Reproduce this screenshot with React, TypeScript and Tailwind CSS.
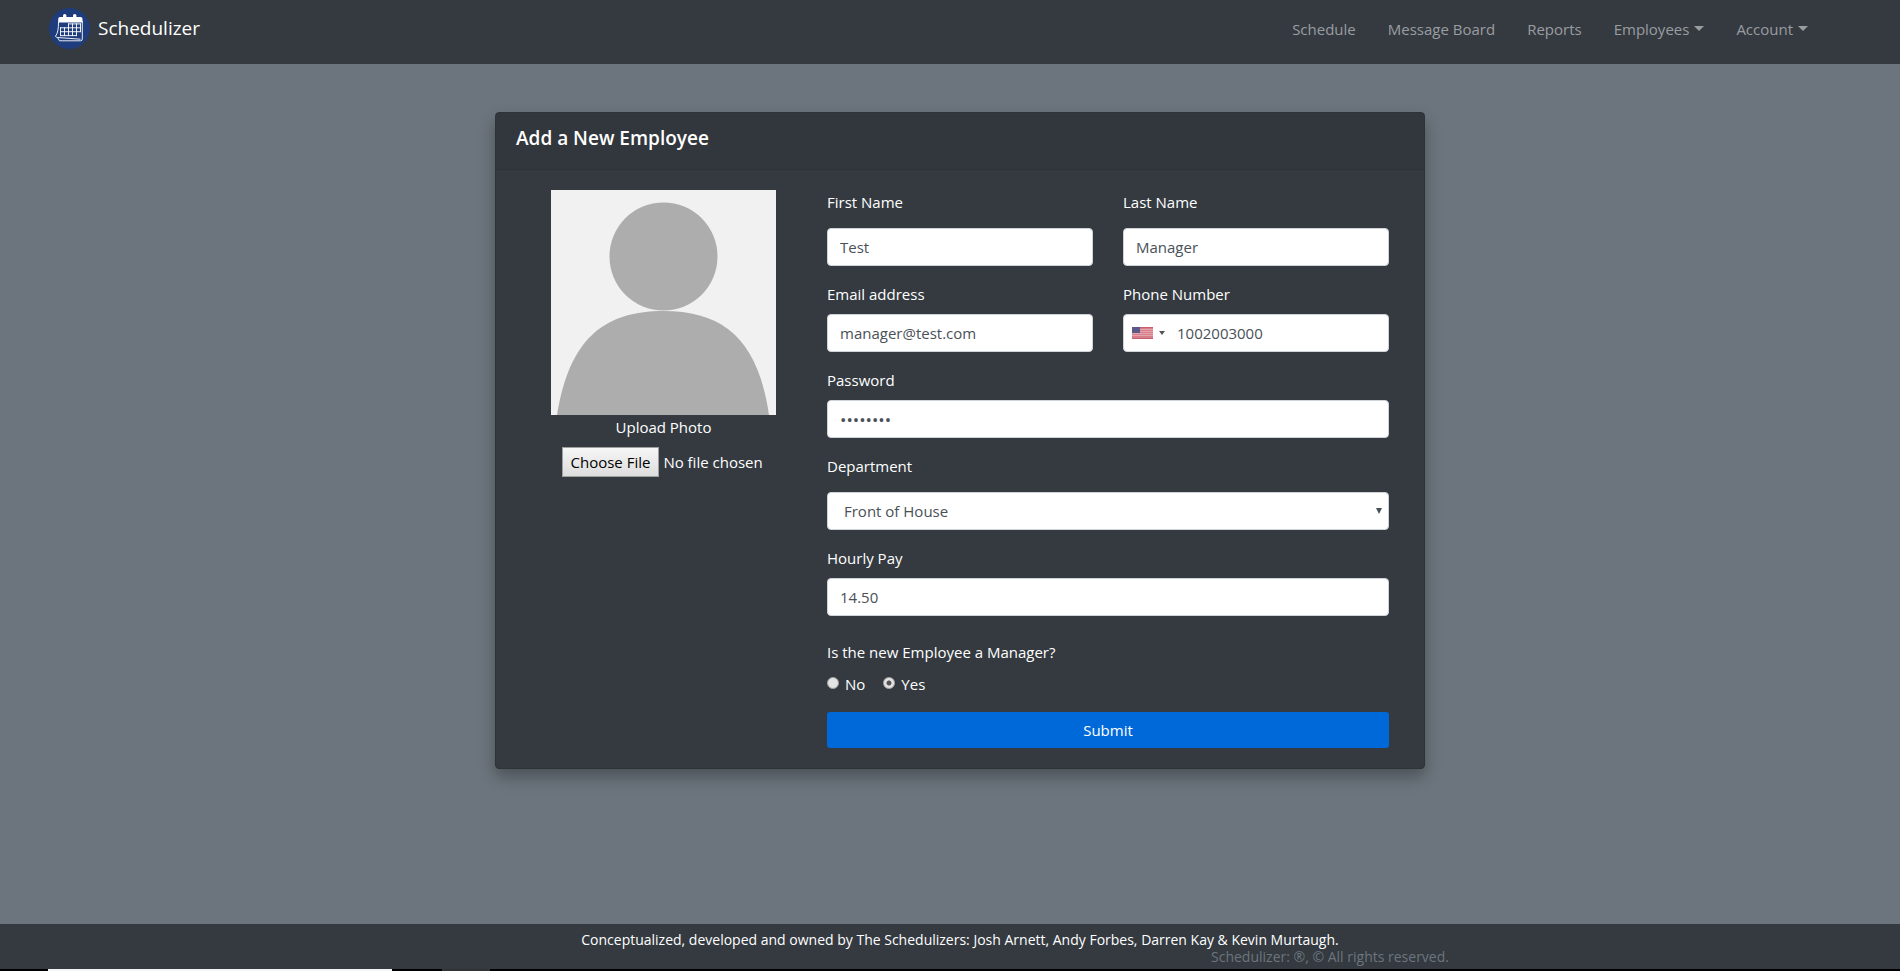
import React from "react";

const inputClass =
  "block h-[38px] w-full rounded border border-[#ced4da] bg-white px-3 text-[#495057] outline-none";

function Logo() {
  return (
    <svg viewBox="0 0 41 41" className="size-[41px] shrink-0" aria-hidden="true">
      <circle cx="20.5" cy="20.5" r="20.5" fill="#1f3d7d" />
      <g fill="none" stroke="#fff" strokeWidth="0.9" strokeLinejoin="round">
        <path d="M9.5 14 C9.5 20 9 25 6.5 28.3 Q6.8 29.3 8.5 29.5 L31.5 31.2" />
        <path d="M8.5 29.5 L10.5 32.8 H31.5 Q33.3 32.8 33.3 31 V13" />
      </g>
      <path d="M9.2 14.5 V11 Q9.2 9 11.2 9 H31.5 Q33.5 9 33.5 11 V14.5 Z" fill="#fff" />
      <rect x="14" y="6" width="3.4" height="5" rx="1.6" fill="#fff" />
      <rect x="24" y="6" width="3.4" height="5" rx="1.6" fill="#fff" />
      <path
        d="M19.5 15.9 H31.5 M11.5 19.8 H31.5 M11.5 23.7 H31.5 M11.5 27.6 H27.5 M11.5 19.8 V27.6 M15.5 19.8 V27.6 M19.5 15.9 V27.6 M23.5 15.9 V27.6 M27.5 15.9 V27.6 M31.5 15.9 V23.7"
        fill="none"
        stroke="#fff"
        strokeWidth="0.9"
        strokeLinecap="square"
      />
    </svg>
  );
}

function Caret() {
  return (
    <svg viewBox="0 0 10 5" className="mb-[2px] h-[5px] w-[10px]" aria-hidden="true">
      <path d="M0 0 H10 L5 5 Z" fill="currentColor" />
    </svg>
  );
}

function Flag() {
  return (
    <svg viewBox="0 0 21 12" className="h-3 w-[21px]" aria-hidden="true">
      <rect width="21" height="12" fill="#d67f8a" />
      <path d="M0 2.5 H21 M0 4.5 H21 M0 6.500 H21 M0 8.500 H21" stroke="#e3a4ac" strokeWidth="1" />
      <path d="M0 0.500 H21 M0 11.500 H21" stroke="#c85f6e" strokeWidth="1" />
      <rect width="8" height="6" fill="#5a5a8a" />
    </svg>
  );
}

function Avatar() {
  return (
    <svg viewBox="0 0 225 225" className="size-[225px]" role="img" aria-label="Profile photo">
      <rect width="225" height="225" fill="#f1f1f1" />
      <circle cx="112.5" cy="66.5" r="54" fill="#adadad" />
      <path d="M6 225 C18 150 52 121 112.5 121 C173 121 207 150 218 225 Z" fill="#adadad" />
    </svg>
  );
}

type FieldProps = {
  id: string;
  label: string;
  tall?: boolean;
  children: React.ReactNode;
};

function Field({ id, label, tall, children }: FieldProps) {
  return (
    <div className="mb-4">
      <label htmlFor={id} className={tall ? "mb-[14px] block" : "mb-2 block"}>
        {label}
      </label>
      {children}
    </div>
  );
}

const radioClass =
  "mb-[2px] size-3 appearance-none rounded-full border border-[#a0a0a0] bg-[#e4e4e4] checked:bg-[radial-gradient(circle,#555_0_2px,#e4e4e4_3px)]";

export default function App() {
  return (
    <div className="flex min-h-screen flex-col bg-[#6c757d] font-['Open_Sans','Noto_Sans',sans-serif] text-[15px] leading-6 text-white">
      <nav className="flex h-16 items-start justify-between bg-[#343a40] pt-2 pr-[92px] pl-[49px]">
        <a href="#" className="flex items-center gap-2 text-[19px]">
          <Logo />
          <span className="pb-[2px]">Schedulizer</span>
        </a>
        <div className="flex h-[42px] items-center gap-8 text-[#9a9da0]">
          <a href="#">Schedule</a>
          <a href="#">Message Board</a>
          <a href="#">Reports</a>
          <button type="button" className="flex items-center gap-[5px]">
            Employees
            <Caret />
          </button>
          <button type="button" className="flex items-center gap-[5px]">
            Account
            <Caret />
          </button>
        </div>
      </nav>

      <main className="flex-1 pt-12 pb-12 pl-5">
        <div className="mx-auto w-full max-w-[930px] rounded border border-[#2e3338] bg-[#343a40] shadow-[0_8px_16px_rgba(0,0,0,0.3)]">
          <div className="border-b border-[#2d3237] bg-[#32373d] px-5 py-3">
            <h1 className="text-[19px] leading-[26px] font-semibold">Add a New Employee</h1>
            <div className="h-[6px]" />
          </div>
          <form
            className="grid grid-cols-[295fr_562fr] gap-4 pt-5 pr-[35px] pb-5 pl-5"
            onSubmit={(e) => e.preventDefault()}
          >
            <div className="flex flex-col items-center">
              <Avatar />
              <label htmlFor="photo" className="mb-2">
                Upload Photo
              </label>
              <input
                id="photo"
                type="file"
                className="w-[204px] file:mr-1 file:h-[30px] file:border file:border-solid file:border-[#a0a0a0] file:bg-linear-to-b file:from-[#f6f6f6] file:to-[#dddddd] file:px-2 file:text-[15px] file:text-black"
              />
            </div>

            <div>
              <div className="grid grid-cols-2 gap-x-[30px]">
                <Field id="first" label="First Name" tall>
                  <input id="first" type="text" defaultValue="Test" className={inputClass} />
                </Field>
                <Field id="last" label="Last Name" tall>
                  <input id="last" type="text" defaultValue="Manager" className={inputClass} />
                </Field>
                <Field id="email" label="Email address">
                  <input id="email" type="email" defaultValue="manager@test.com" className={inputClass} />
                </Field>
                <Field id="phone" label="Phone Number">
                  <div className="flex h-[38px] items-center rounded border border-[#ced4da] bg-white pl-2 text-[#495057]">
                    <button type="button" aria-label="Country code" className="flex items-center gap-[6px]">
                      <Flag />
                      <svg viewBox="0 0 6 4" className="h-1 w-[6px]" aria-hidden="true">
                        <path d="M0 0 H6 L3 4 Z" fill="#555" />
                      </svg>
                    </button>
                    <input
                      id="phone"
                      type="tel"
                      defaultValue="1002003000"
                      className="min-w-0 flex-1 bg-transparent px-3 outline-none"
                    />
                  </div>
                </Field>
              </div>
              <Field id="password" label="Password">
                <div className="text-[17px]">
                  <input id="password" type="password" defaultValue="password" className={inputClass} />
                </div>
              </Field>
              <Field id="department" label="Department" tall>
                <div className="relative">
                  <select
                    id="department"
                    className="block h-[38px] w-full appearance-none rounded border border-[#ced4da] bg-white px-4 text-[#495057] outline-none"
                  >
                    <option>Front of House</option>
                  </select>
                  <svg
                    viewBox="0 0 6 6"
                    className="pointer-events-none absolute top-4 right-[7px] size-[6px]"
                    aria-hidden="true"
                  >
                    <path d="M0 0 H6 L3 6 Z" fill="#495057" />
                  </svg>
                </div>
              </Field>
              <Field id="pay" label="Hourly Pay">
                <input id="pay" type="text" defaultValue="14.50" className={inputClass} />
              </Field>
              <fieldset className="mb-4 pt-2">
                <legend className="float-left mb-2 w-full">Is the new Employee a Manager?</legend>
                <div className="clear-both flex gap-[18px]">
                  <label className="flex items-center gap-[6px]">
                    <input type="radio" name="manager" className={radioClass} />
                    No
                  </label>
                  <label className="flex items-center gap-[6px]">
                    <input type="radio" name="manager" defaultChecked className={radioClass} />
                    Yes
                  </label>
                </div>
              </fieldset>
              <button type="submit" className="block h-9 w-full rounded-[3px] bg-[#0069d9]">
                Submit
              </button>
            </div>
          </form>
        </div>
      </main>

      <footer className="bg-[#343a40] pl-5 text-center text-[14px]">
        <div className="h-[45px] pt-2">
          <p className="leading-4">
            Conceptualized, developed and owned by The Schedulizers: Josh Arnett, Andy Forbes, Darren Kay &amp; Kevin
            Murtaugh.
          </p>
          <p className="pl-[740px] leading-[18px] text-[#6c757d]">Schedulizer: ®, © All rights reserved.</p>
        </div>
      </footer>
      <div className="flex h-[2px] bg-black pl-12">
        <div className="w-[344px] bg-[#f5f5f5]" />
        <div className="ml-[50px] w-12 bg-[#333]" />
      </div>
    </div>
  );
}
